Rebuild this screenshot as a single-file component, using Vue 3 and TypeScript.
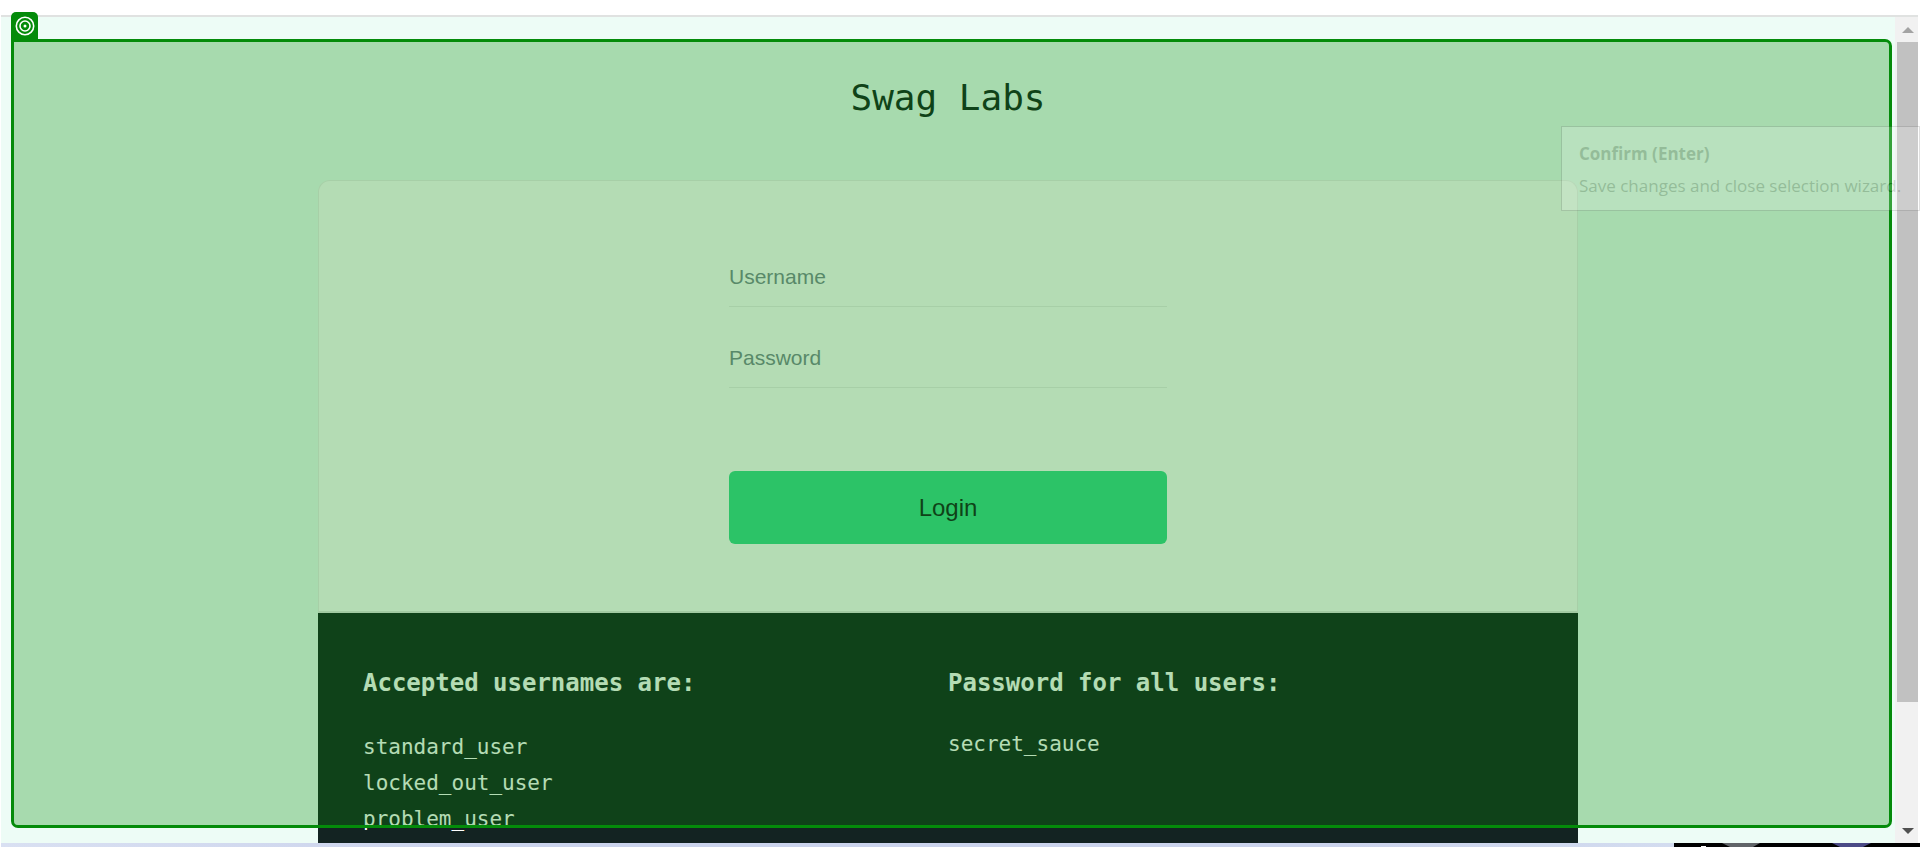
<script setup lang="ts">
import { ref } from 'vue'

const username = ref('')
const password = ref('')
const users: string[] = ['standard_user', 'locked_out_user', 'problem_user']
</script>

<template>
  <div class="screen">
    <div class="viewport">
      <main class="page">
        <h1 class="title">Swag Labs</h1>
        <section class="card">
          <form class="form" @submit.prevent>
            <input v-model="username" class="field" type="text" placeholder="Username" aria-label="Username" />
            <input v-model="password" class="field" type="password" placeholder="Password" aria-label="Password" />
            <button class="login" type="submit">Login</button>
          </form>
        </section>
        <section class="credentials">
          <div>
            <h2>Accepted usernames are:</h2>
            <ul>
              <li v-for="user in users" :key="user">{{ user }}</li>
            </ul>
          </div>
          <div>
            <h2>Password for all users:</h2>
            <p>secret_sauce</p>
          </div>
        </section>
      </main>
      <div class="scrollbar">
        <button class="arrow" type="button" aria-label="Scroll up">
          <svg width="12" height="6" viewBox="0 0 12 6"><path d="M6 0 12 6H0Z" fill="#a3a3a3" /></svg>
        </button>
        <div class="track"><div class="thumb"></div></div>
        <button class="arrow" type="button" aria-label="Scroll down">
          <svg width="12" height="6" viewBox="0 0 12 6"><path d="M0 0H12L6 6Z" fill="#505050" /></svg>
        </button>
      </div>
      <div class="selection">
        <div class="badge">
          <svg width="20" height="20" viewBox="0 0 20 20" fill="none" stroke="#fff" stroke-width="1.6">
            <circle cx="10" cy="10" r="8.7" />
            <circle cx="10" cy="10" r="5" />
            <circle cx="10" cy="10" r="1.5" fill="#fff" stroke="none" />
          </svg>
        </div>
      </div>
    </div>
    <div class="taskbar">
      <svg width="246" height="4" viewBox="0 0 246 4">
        <path d="M0 0H246V4H0Z" fill="#000" />
        <path d="M27 3H32V4H27Z" fill="#fff" />
        <path d="M48 0H86L79 4H56Z" fill="#606468" />
        <path d="M158 0H197L189 4H166Z" fill="#4b4a86" />
      </svg>
    </div>
    <div class="tooltip" role="tooltip">
      <strong>Confirm (Enter)</strong>
      <span>Save changes and close selection wizard.</span>
    </div>
  </div>
</template>

<style>
body {
  margin: 0;
  background: #fff;
}
</style>

<style scoped>
.screen {
  position: relative;
  display: flex;
  flex-direction: column;
  height: 100vh;
  padding-top: 15px;
  box-sizing: border-box;
  overflow: hidden;
  font-family: "Liberation Sans", Arial, sans-serif;
  color: #132322;
}
.viewport {
  position: relative;
  display: flex;
  flex: 1;
  min-height: 0;
  margin: 0 2px 0 1px;
  border-top: 2px solid #e0e2e1;
}
.page {
  display: flex;
  flex: 1;
  flex-direction: column;
  align-items: center;
  overflow: hidden;
  background: #edfcf6;
}
.title {
  flex: none;
  margin: 59px 0 60px;
  font: 400 36px/44px "DejaVu Sans Mono", monospace;
}
.card {
  display: flex;
  flex: none;
  justify-content: center;
  width: 100%;
  max-width: 1260px;
  box-sizing: border-box;
  padding: 67px 0;
  border: 1px solid #ededed;
  border-bottom: 2px solid #e6e6e6;
  border-radius: 12px 12px 0 0;
  background: #fff;
}
.form {
  display: flex;
  flex-direction: column;
  gap: 22px;
  width: 438px;
}
.field {
  height: 59px;
  box-sizing: border-box;
  padding: 0;
  border: 0;
  border-bottom: 1px solid #ededed;
  outline: 0;
  background: transparent;
  color: #132322;
  font: 21px "Liberation Sans", Arial, sans-serif;
}
.field::placeholder {
  color: #7c8894;
  opacity: 1;
}
.login {
  height: 73px;
  margin-top: 61px;
  border: 0;
  border-radius: 6px;
  background: #3ddc91;
  color: #132322;
  font: 24px "Liberation Sans", Arial, sans-serif;
}
.credentials {
  display: grid;
  flex: none;
  grid-template-columns: 1fr 1fr;
  width: 100%;
  max-width: 1260px;
  box-sizing: border-box;
  padding: 52px 45px;
  background: #132322;
  color: #fff;
  font: 21px/36px "DejaVu Sans Mono", monospace;
}
.credentials h2 {
  margin: 0 0 28px;
  font-size: 24px;
  line-height: 36px;
}
.credentials ul {
  margin: 0;
  padding: 0;
  list-style: none;
}
.credentials p {
  margin: 0;
  line-height: 30px;
}
.scrollbar {
  display: flex;
  flex-direction: column;
  width: 23px;
  box-sizing: border-box;
  padding-left: 2px;
  background: #f1f1f1;
}
.arrow {
  display: flex;
  align-items: center;
  justify-content: center;
  height: 25px;
  padding: 0;
  border: 0;
  background: transparent;
}
.track {
  flex: 1;
}
.thumb {
  height: 85%;
  background: #c1c1c1;
}
.selection {
  position: absolute;
  inset: 22px 26px 15px 10px;
  border: 3px solid #048b0a;
  border-radius: 0 7px 7px 7px;
  background: rgba(5, 139, 8, 0.3);
  background-clip: padding-box;
  pointer-events: none;
}
.badge {
  position: absolute;
  left: -3px;
  bottom: 100%;
  display: flex;
  align-items: center;
  justify-content: center;
  width: 27px;
  height: 30px;
  box-sizing: border-box;
  padding-bottom: 3px;
  border-radius: 5px 5px 0 0;
  background: #048b0a;
}
.taskbar {
  display: flex;
  justify-content: flex-end;
  height: 4px;
  margin-left: 1px;
  background: linear-gradient(90deg, #d9e0f2, #cbd3ec 25%, #cbd3ec 70%, #d9e3f2);
}
.tooltip {
  position: absolute;
  top: 126px;
  right: 0;
  display: flex;
  flex-direction: column;
  width: 359px;
  height: 85px;
  box-sizing: border-box;
  padding: 11px 0 0 17px;
  border: 1px solid #666;
  background: #fff;
  color: #4a4a4a;
  opacity: 0.2;
  font: 17px/32px "Open Sans", sans-serif;
  white-space: nowrap;
}
</style>
